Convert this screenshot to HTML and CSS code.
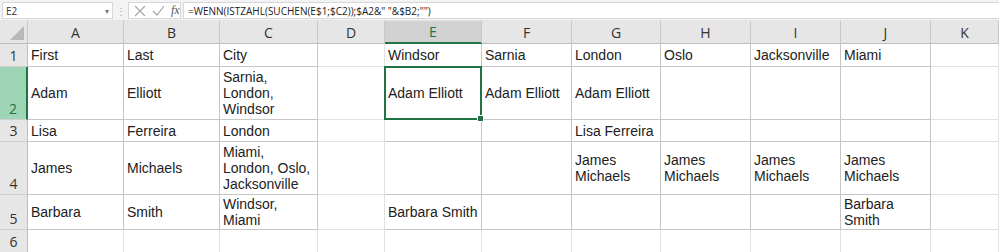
FILE: index.html
```html
<!DOCTYPE html>
<html lang="en">
<head>
    <meta charset="UTF-8">
    <title>Sheet</title>
    <link rel="stylesheet" href="styles.css">
</head>
<body>
    <div class="formula-bar">
        <div class="name-box">
            <span>E2</span>
            <span class="caret">&#9662;</span>
        </div>
        <div class="grip">&#8942;</div>
        <div class="fx-buttons">
            <svg width="12" height="12" viewBox="0 0 12 12"><path d="M1 1 L11 11 M11 1 L1 11" stroke="#a6a6a6" stroke-width="1.2" fill="none"/></svg>
            <svg width="13" height="12" viewBox="0 0 13 12"><path d="M1 6 L5 10 L12 1" stroke="#a6a6a6" stroke-width="1.2" fill="none"/></svg>
            <span class="fx">fx</span>
        </div>
        <div class="formula">=WENN(ISTZAHL(SUCHEN(E$1;$C2));$A2&amp;" "&amp;$B2;"")</div>
    </div>

    <div class="sheet">
        <div class="corner"></div>
        <div class="col-head">A</div>
        <div class="col-head">B</div>
        <div class="col-head">C</div>
        <div class="col-head">D</div>
        <div class="col-head active">E</div>
        <div class="col-head">F</div>
        <div class="col-head">G</div>
        <div class="col-head">H</div>
        <div class="col-head">I</div>
        <div class="col-head">J</div>
        <div class="col-head">K</div>

        <div class="row-head">1</div>
        <div class="cell">First</div>
        <div class="cell">Last</div>
        <div class="cell">City</div>
        <div class="cell empty"></div>
        <div class="cell">Windsor</div>
        <div class="cell">Sarnia</div>
        <div class="cell">London</div>
        <div class="cell">Oslo</div>
        <div class="cell">Jacksonville</div>
        <div class="cell">Miami</div>
        <div class="cell empty"></div>

        <div class="row-head active">2</div>
        <div class="cell">Adam</div>
        <div class="cell">Elliott</div>
        <div class="cell">Sarnia,<br>London,<br>Windsor</div>
        <div class="cell empty"></div>
        <div class="cell selected">Adam Elliott</div>
        <div class="cell">Adam Elliott</div>
        <div class="cell">Adam Elliott</div>
        <div class="cell"></div>
        <div class="cell"></div>
        <div class="cell"></div>
        <div class="cell empty"></div>

        <div class="row-head">3</div>
        <div class="cell">Lisa</div>
        <div class="cell">Ferreira</div>
        <div class="cell">London</div>
        <div class="cell empty"></div>
        <div class="cell"></div>
        <div class="cell"></div>
        <div class="cell">Lisa Ferreira</div>
        <div class="cell"></div>
        <div class="cell"></div>
        <div class="cell"></div>
        <div class="cell empty"></div>

        <div class="row-head">4</div>
        <div class="cell">James</div>
        <div class="cell">Michaels</div>
        <div class="cell">Miami,<br>London, Oslo,<br>Jacksonville</div>
        <div class="cell empty"></div>
        <div class="cell"></div>
        <div class="cell"></div>
        <div class="cell">James<br>Michaels</div>
        <div class="cell">James<br>Michaels</div>
        <div class="cell">James<br>Michaels</div>
        <div class="cell">James<br>Michaels</div>
        <div class="cell empty"></div>

        <div class="row-head">5</div>
        <div class="cell">Barbara</div>
        <div class="cell">Smith</div>
        <div class="cell">Windsor,<br>Miami</div>
        <div class="cell empty"></div>
        <div class="cell">Barbara Smith</div>
        <div class="cell"></div>
        <div class="cell"></div>
        <div class="cell"></div>
        <div class="cell"></div>
        <div class="cell">Barbara<br>Smith</div>
        <div class="cell empty"></div>

        <div class="row-head">6</div>
        <div class="cell empty"></div>
        <div class="cell empty"></div>
        <div class="cell empty"></div>
        <div class="cell empty"></div>
        <div class="cell empty"></div>
        <div class="cell empty"></div>
        <div class="cell empty"></div>
        <div class="cell empty"></div>
        <div class="cell empty"></div>
        <div class="cell empty"></div>
        <div class="cell empty"></div>
    </div>
</body>
</html>
```

FILE: styles.css
```css
* {
    box-sizing: border-box;
}
body {
    margin: 0;
    width: 999px;
    height: 252px;
    overflow: hidden;
    background-color: #fff;
    font-family: "Liberation Sans", Arial, sans-serif;
    color: #222;
}
.formula-bar {
    display: flex;
    align-items: center;
    height: 20px;
    padding: 2px 0 1px 2px;
    background-color: #f3f3f3;
    font-family: "Open Sans", "Noto Sans", sans-serif;
    font-size: 10px;
}
.name-box {
    display: flex;
    justify-content: space-between;
    align-items: center;
    width: 111px;
    height: 17px;
    padding: 0 3px;
    background-color: white;
    border: 1px solid #d6d6d6;
    color: #333;
}
.caret {
    font-size: 8px;
    color: #777;
}
.grip {
    width: 15px;
    text-align: center;
    color: #a6a6a6;
    font-size: 10px;
}
.fx-buttons {
    display: flex;
    align-items: center;
    gap: 6px;
    width: 53px;
    height: 17px;
    padding-left: 5px;
    background-color: white;
    border: 1px solid #d6d6d6;
}
.fx {
    font-family: "Liberation Serif", serif;
    font-style: italic;
    font-size: 12px;
    color: #555;
}
.formula {
    flex: 1;
    height: 17px;
    margin-left: 2px;
    padding: 1px 4px;
    background-color: white;
    border: 1px solid #d6d6d6;
    border-right: none;
    color: #222;
    white-space: nowrap;
}
.sheet {
    display: grid;
    grid-template-columns: 28px 96px 96px 98px 67px 97px 90px 89px 90px 90px 90px 68px;
    grid-template-rows: 23px 23px 53px 22px 53px 35px 23px;
    border-top: 1px solid #e4e4e4;
}
.corner {
    position: relative;
    background-color: #e6e6e6;
    border-right: 1px solid #c8c8c8;
    border-bottom: 1px solid #bdbdbd;
}
.corner::after {
    content: "";
    position: absolute;
    right: 3px;
    bottom: 3px;
    border-left: 14px solid transparent;
    border-bottom: 14px solid #b8b8b8;
}
.col-head {
    display: flex;
    align-items: center;
    justify-content: center;
    background-color: #e6e6e6;
    border-right: 1px solid #c8c8c8;
    border-bottom: 1px solid #bdbdbd;
    font-family: "Open Sans", "Noto Sans", sans-serif;
    font-size: 14px;
    color: #333;
}
.col-head.active {
    background-color: #d2d2d2;
    border-bottom: 2px solid #217346;
    color: #217346;
}
.row-head {
    display: flex;
    align-items: flex-end;
    justify-content: center;
    padding-bottom: 1px;
    background-color: #e6e6e6;
    border-right: 1px solid #bdbdbd;
    border-bottom: 1px solid #cfcfcf;
    font-family: "Open Sans", "Noto Sans", sans-serif;
    font-size: 14px;
    color: #333;
}
.row-head.active {
    background-color: #9fd5b7;
    border-right: 2px solid #217346;
    color: #217346;
}
.cell {
    position: relative;
    display: flex;
    align-items: center;
    padding-left: 3px;
    border-right: 1px solid #c6c6c6;
    border-bottom: 1px solid #c6c6c6;
    font-size: 14px;
    line-height: 16px;
    white-space: nowrap;
}
.cell.empty {
    border-right-color: #e1e1e1;
    border-bottom-color: #e1e1e1;
}
.selected::after {
    content: "";
    position: absolute;
    top: -1px;
    left: -1px;
    right: -1px;
    bottom: -1px;
    border: 2px solid #217346;
}
.selected::before {
    content: "";
    position: absolute;
    right: -3px;
    bottom: -3px;
    width: 5px;
    height: 5px;
    background-color: #217346;
    border: 1px solid white;
    z-index: 1;
}
```
